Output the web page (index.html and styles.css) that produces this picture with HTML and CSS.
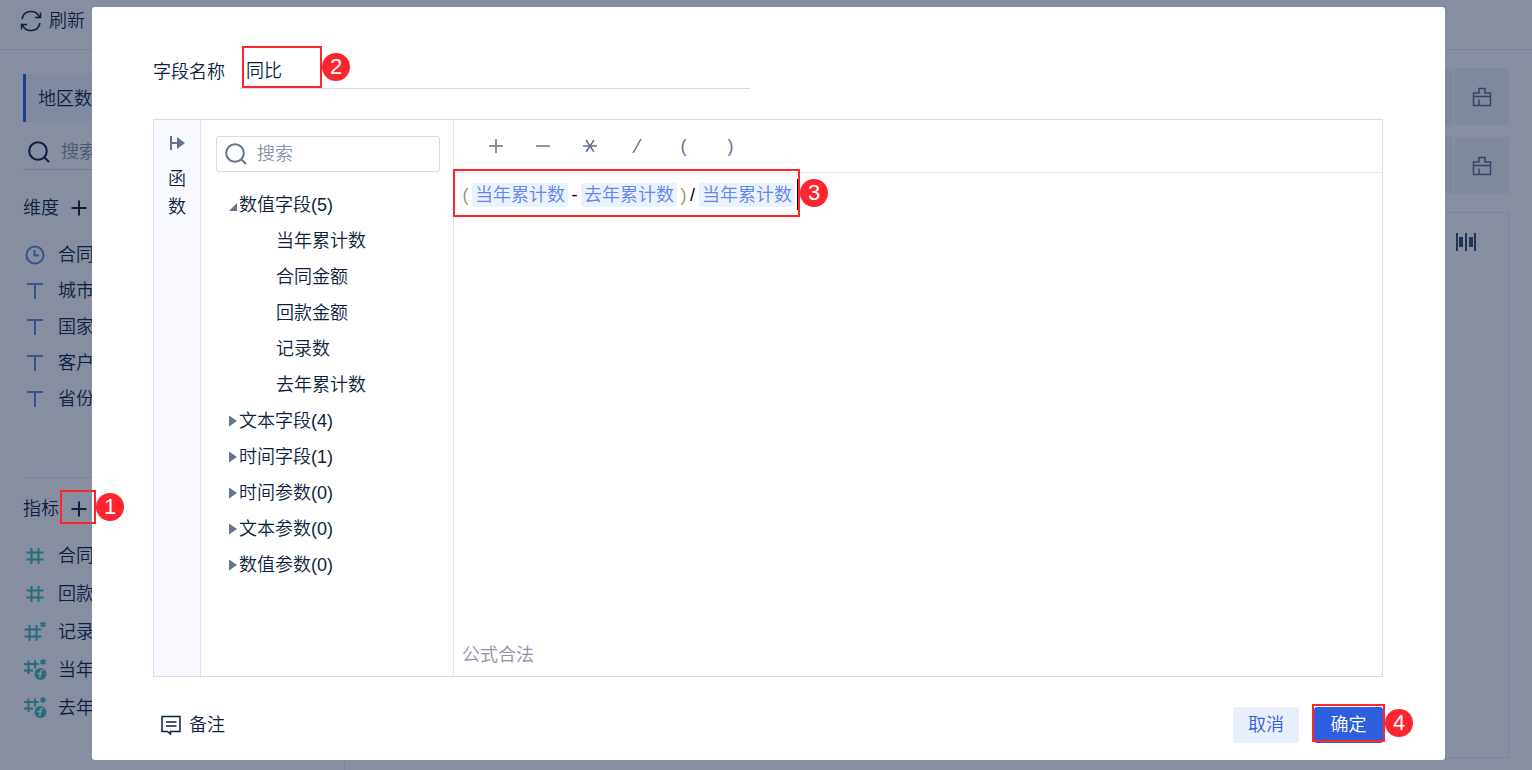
FILE: index.html
```
<!DOCTYPE html>
<html lang="zh-CN">
<head>
<meta charset="UTF-8">
<title>字段设置</title>
<link rel="stylesheet" href="styles.css">
</head>
<body>
	<!-- icons -->
	<svg class="defs" width="0" height="0">
		<symbol id="i-search" viewBox="0 0 22 22"><circle cx="10" cy="10" r="8.8"/><path d="M16.2 16.2L21 21"/></symbol>
		<symbol id="i-plus" viewBox="0 0 16 16"><path d="M8 .5v15M.5 8h15"/></symbol>
		<symbol id="i-text" viewBox="0 0 24 24"><path d="M4 5h16M12 5v15"/></symbol>
		<symbol id="i-clock" viewBox="0 0 24 24"><circle cx="12" cy="12" r="8.5"/><path d="M11.5 7v5.5H16"/></symbol>
		<symbol id="i-num" viewBox="0 0 24 24"><path d="M8.500 4v16M15.500 4v16M3.500 8.500h17M3.500 15.500h17"/></symbol>
		<symbol id="i-num-star" viewBox="0 0 24 24"><path d="M6.500 5v16M13.500 5v16M1.500 9.500h17M1.500 16.500h17"/><path class="thin" d="M20 1.500v6M17.400 3l5.200 3M22.600 3l-5.200 3"/></symbol>
		<symbol id="i-num-fx" viewBox="0 0 24 24"><path d="M5.500 2.500v13.500M12 2.500v8M1 6h14.500M1 12.500h9"/><path class="thin" d="M20 1v6M17.400 2.500l5.200 3M22.600 2.500l-5.200 3"/><circle class="dot" cx="17.500" cy="16" r="6"/><path class="fx" d="M20.500 12.500c-2-.8-2.800.2-3 1.800l-.8 5.700M14.500 15.500h4.500"/></symbol>
		<symbol id="i-brush" viewBox="0 0 20 20"><path d="M1.500 6H7V1.500h6V6h5.500v12.500h-17zM1.500 9.500h17M7 12.500v6"/></symbol>
		<symbol id="i-arrow" viewBox="0 0 8 12"><path d="M0 .5L8 6l-8 5.500z"/></symbol>
	</svg>

	<div class="page">
		<header class="topbar">
			<button class="refresh">
				<svg class="icon" width="22" height="22" viewBox="0 0 22 22"><path d="M2 9a9.200 9.200 0 0 1 17.500-2M20.500 2.500v5H15M20 13a9.200 9.200 0 0 1-17.500 2M1.500 19.500v-5H7"/></svg>
				刷新
			</button>
		</header>
		<div class="body">
			<aside class="side">
				<div class="tab">地区数</div>
				<label class="side-search">
					<svg class="icon bold" width="22" height="22"><use href="#i-search"/></svg>
					<input type="text" placeholder="搜索">
				</label>
				<div class="group">
					<span>维度</span>
					<button class="add" aria-label="添加维度"><svg class="icon bold" width="16" height="16"><use href="#i-plus"/></svg></button>
				</div>
				<ul class="dims">
					<li><svg class="icon" width="24" height="24"><use href="#i-clock"/></svg>合同</li>
					<li><svg class="icon" width="24" height="24"><use href="#i-text"/></svg>城市</li>
					<li><svg class="icon" width="24" height="24"><use href="#i-text"/></svg>国家</li>
					<li><svg class="icon" width="24" height="24"><use href="#i-text"/></svg>客户</li>
					<li><svg class="icon" width="24" height="24"><use href="#i-text"/></svg>省份</li>
				</ul>
				<div class="group metric">
					<span>指标</span>
					<button class="add" aria-label="添加指标"><svg class="icon bold" width="16" height="16"><use href="#i-plus"/></svg></button>
					<div class="mark mark-add"><span class="num">1</span></div>
				</div>
				<ul class="metrics">
					<li><svg class="icon" width="24" height="24"><use href="#i-num"/></svg>合同</li>
					<li><svg class="icon" width="24" height="24"><use href="#i-num"/></svg>回款</li>
					<li><svg class="icon" width="24" height="24"><use href="#i-num-star"/></svg>记录</li>
					<li><svg class="icon" width="24" height="24"><use href="#i-num-fx"/></svg>当年</li>
					<li><svg class="icon" width="24" height="24"><use href="#i-num-fx"/></svg>去年</li>
				</ul>
			</aside>
			<main class="main">
				<div class="shelf"><button aria-label="清空"><svg class="icon" width="20" height="20"><use href="#i-brush"/></svg></button></div>
				<div class="shelf"><button aria-label="清空"><svg class="icon" width="20" height="20"><use href="#i-brush"/></svg></button></div>
				<div class="chart">
					<svg class="bars" width="20" height="20" viewBox="0 0 20 20"><path d="M0 1h2v18H0zM3 5h4v10H3zM9 1h2v18H9zM13 5h4v10h-4zM18 1h2v18h-2z"/></svg>
				</div>
			</main>
		</div>
	</div>

	<div class="overlay">
		<div class="modal" role="dialog">
			<div class="name-row">
				<label for="fieldName">字段名称</label>
				<div class="name-box">
					<input type="text" id="fieldName" value="同比">
					<div class="mark mark-name"><span class="num">2</span></div>
				</div>
			</div>

			<div class="editor">
				<div class="rail">
					<svg width="16" height="16" viewBox="0 0 16 16"><path d="M1 1h2v6h5V2l8 6-8 6V9H3v6H1z"/></svg>
					<span>函</span>
					<span>数</span>
				</div>
				<div class="fields">
					<label class="search">
						<svg class="icon bold" width="22" height="22"><use href="#i-search"/></svg>
						<input type="text" placeholder="搜索">
					</label>
					<ul class="tree">
						<li><svg class="arrow" width="8" height="8" viewBox="0 0 8 8"><path d="M8 0v8H0z"/></svg>数值字段(5)
							<ul>
								<li>当年累计数</li>
								<li>合同金额</li>
								<li>回款金额</li>
								<li>记录数</li>
								<li>去年累计数</li>
							</ul>
						</li>
						<li><svg class="arrow" width="8" height="12"><use href="#i-arrow"/></svg>文本字段(4)</li>
						<li><svg class="arrow" width="8" height="12"><use href="#i-arrow"/></svg>时间字段(1)</li>
						<li><svg class="arrow" width="8" height="12"><use href="#i-arrow"/></svg>时间参数(0)</li>
						<li><svg class="arrow" width="8" height="12"><use href="#i-arrow"/></svg>文本参数(0)</li>
						<li><svg class="arrow" width="8" height="12"><use href="#i-arrow"/></svg>数值参数(0)</li>
					</ul>
				</div>
				<div class="formula">
					<div class="ops">
						<button aria-label="加"><svg class="icon" width="14" height="14" viewBox="0 0 14 14"><path d="M7 0v14M0 7h14"/></svg></button>
						<button aria-label="减"><svg class="icon" width="14" height="14" viewBox="0 0 14 14"><path d="M0 7h14"/></svg></button>
						<button aria-label="乘"><svg class="icon" width="14" height="14" viewBox="0 0 14 14"><path d="M0 7h14M3 1l8 12M11 1L3 13"/></svg></button>
						<button aria-label="除"><svg class="icon" width="14" height="14" viewBox="0 0 14 14"><path d="M11 0L3 14"/></svg></button>
						<button>(</button>
						<button>)</button>
					</div>
					<div class="code" contenteditable="true" role="textbox" aria-label="公式"><span class="paren">(</span><span class="chip">当年累计数</span><span class="op">-</span><span class="chip">去年累计数</span><span class="paren">)</span><span class="op">/</span><span class="chip">当年累计数</span><span class="caret"></span></div>
					<p class="status">公式合法</p>
					<div class="mark mark-code"><span class="num">3</span></div>
				</div>
			</div>

			<div class="footer">
				<button class="remark">
					<svg class="icon" width="20" height="20" viewBox="0 0 20 20"><path d="M1 1.500h18v15H9.500v2.500L6.500 16.500H1zM5 7h10.500M5 11h10.500"/></svg>
					备注
				</button>
				<button class="btn">取消</button>
				<div class="ok-box">
					<button class="btn primary">确定</button>
					<div class="mark mark-ok"><span class="num">4</span></div>
				</div>
			</div>
		</div>
	</div>
</body>
</html>
```

FILE: styles.css
```
* {
	box-sizing: border-box;
}

body {
	margin: 0;
	font-family: "Liberation Sans", "Noto Sans CJK SC", sans-serif;
	font-size: 18px;
	font-weight: 350;
	line-height: 36px;
	color: #0d1e40;
}

ul {
	list-style: none;
	margin: 0;
	padding: 0;
}

p {
	margin: 0;
}

button, input {
	font: inherit;
	color: inherit;
	border: 0;
	padding: 0;
	background: none;
}

button {
	cursor: pointer;
}

input {
	outline: none;
	min-width: 0;
}

input::placeholder {
	color: #8b93a6;
	opacity: 1;
}

.defs {
	position: absolute;
}

.icon {
	fill: none;
	stroke: currentColor;
	stroke-width: 1.5;
	flex: none;
}

.icon.bold {
	stroke-width: 2;
}

/* page behind the dialog */
.page {
	display: flex;
	flex-direction: column;
	height: 100vh;
	overflow: hidden;
}

.topbar {
	display: flex;
	height: 50px;
	padding: 3px 20px;
	border-bottom: 1px solid #e6e9ee;
}

.refresh {
	display: flex;
	align-items: center;
	gap: 7px;
	height: 36px;
}

.body {
	display: flex;
	flex: 1;
	min-height: 0;
}

.side {
	width: 345px;
	padding: 24px 21px 0 23px;
	border-right: 1px solid #e6e9ee;
}

.tab {
	height: 48px;
	line-height: 50px;
	padding-left: 12px;
	border-left: 3px solid #2d5edc;
	background: #f4f7fc;
}

.side-search {
	display: flex;
	align-items: center;
	gap: 11px;
	height: 36px;
	margin-top: 12px;
	padding-left: 5px;
	border-bottom: 1px solid #d6dae2;
}

.group {
	position: relative;
	display: flex;
	align-items: center;
	gap: 12px;
	margin: 20px 0 11px;
}

.add {
	display: flex;
	align-items: center;
	height: 36px;
}

.dims li, .metrics li {
	display: flex;
	align-items: center;
	gap: 11px;
	height: 36px;
}

.dims .icon {
	color: #628ce0;
	stroke-width: 2;
}

.metrics li {
	height: 38px;
}

.metrics .icon {
	color: #43bcb8;
	stroke-width: 2;
}

.thin {
	stroke-width: 1.5;
}

.dot {
	fill: currentColor;
	stroke: none;
}

.fx {
	stroke: #fff;
	stroke-width: 1.5;
}

.metric {
	margin: 60px 0 10px;
	padding-top: 13px;
	border-top: 1px solid #e6e9ee;
}

.main {
	display: flex;
	flex-direction: column;
	flex: 1;
	padding: 18px 23px 12px 18px;
}

.shelf {
	display: flex;
	justify-content: flex-end;
	height: 57px;
	margin-bottom: 12px;
	background: #f2f5f9;
}

.shelf button {
	display: flex;
	align-items: center;
	justify-content: center;
	width: 56px;
	border-left: 2px solid #fff;
	color: #5c6b8c;
}

.shelf .icon {
	stroke-width: 1.5;
}

.chart {
	display: flex;
	justify-content: flex-end;
	flex: 1;
	margin-top: 6px;
	padding: 19px 32px;
	border: 1px solid #e6e9ee;
}

.bars {
	fill: #3b4a70;
}

/* dialog */
.overlay {
	position: fixed;
	inset: 0;
	z-index: 5;
	padding: 7px 87px 10px 92px;
	background: rgba(13, 30, 64, 0.5);
}

.modal {
	display: flex;
	flex-direction: column;
	height: 100%;
	padding: 47px 62px 17px 61px;
	border-radius: 3px;
	background: #fff;
}

.name-row {
	display: flex;
	gap: 15px;
	height: 35px;
}

.name-box {
	position: relative;
	width: 510px;
}

.name-box input {
	display: block;
	width: 100%;
	height: 35px;
	padding-left: 6px;
	border-bottom: 1px solid #d4dae2;
}

.editor {
	display: flex;
	flex: 1;
	min-height: 0;
	margin-top: 30px;
	border: 1px solid #d9dce5;
}

.rail {
	display: flex;
	flex-direction: column;
	align-items: center;
	width: 47px;
	padding-top: 15px;
	border-right: 1px solid #e1e4ed;
	background: #f8f9fe;
	line-height: 28px;
}

.rail svg {
	fill: #66738c;
	margin-bottom: 14px;
}

.fields {
	width: 253px;
	padding: 16px 13px 0 15px;
	border-right: 1px solid #e4e7ee;
}

.search {
	display: flex;
	align-items: center;
	gap: 10px;
	height: 36px;
	padding: 0 8px;
	border: 1px solid #d9dce5;
	border-radius: 3px;
	color: #66738c;
}

.tree {
	margin-top: 15px;
	padding-left: 13px;
}

.tree ul {
	padding-left: 47px;
}

.arrow {
	fill: #66738c;
	margin-right: 2px;
}

.formula {
	position: relative;
	display: flex;
	flex-direction: column;
	flex: 1;
}

.ops {
	display: flex;
	height: 53px;
	padding-left: 18px;
	border-bottom: 1px solid #e4e7ee;
	color: #66738c;
}

.ops button {
	display: flex;
	align-items: center;
	justify-content: center;
	width: 47px;
}

.code {
	display: flex;
	align-items: center;
	align-content: flex-start;
	flex-wrap: wrap;
	flex: 1;
	padding: 6px 7px;
	line-height: 24px;
	outline: none;
}

.paren, .op {
	display: flex;
	justify-content: center;
	width: 9px;
	color: #000;
}

.paren {
	color: #999977;
}

.chip {
	height: 24px;
	margin: 0 2px;
	padding: 0 3px;
	border-radius: 3px;
	background: #eaf2fe;
	color: #5f86ec;
}

.caret {
	width: 1px;
	height: 31px;
	background: #000;
}

.status {
	height: 39px;
	padding-left: 8px;
	color: #8b93a6;
}

.footer {
	display: flex;
	align-items: center;
	gap: 15px;
	margin-top: 30px;
}

.remark {
	display: flex;
	align-items: center;
	gap: 8px;
	margin-right: auto;
	padding-left: 8px;
}

.btn {
	display: block;
	width: 66px;
	height: 36px;
	border-radius: 3px;
	background: #e9effc;
	color: #2d5edc;
}

.btn.primary {
	width: 69px;
	background: #2d5edc;
	color: #fff;
}

.ok-box {
	position: relative;
}

/* numbered step marks */
.mark {
	position: absolute;
	z-index: 10;
	border: 2px solid #fe262e;
	pointer-events: none;
}

.mark-add {
	left: 37px;
	top: 12px;
	width: 36px;
	height: 34px;
}

.mark-name {
	left: 2px;
	top: -8px;
	width: 80px;
	height: 42px;
}

.mark-code {
	left: -1px;
	top: 49px;
	width: 347px;
	height: 48px;
}

.mark-ok {
	left: -2px;
	top: -3px;
	width: 73px;
	height: 38px;
}

.num {
	position: absolute;
	left: 100%;
	top: 50%;
	width: 28px;
	height: 28px;
	margin: -14px 0 0 2px;
	border-radius: 50%;
	background: #fe262e;
	color: #fff;
	font-size: 22px;
	line-height: 28px;
	text-align: center;
}
```
